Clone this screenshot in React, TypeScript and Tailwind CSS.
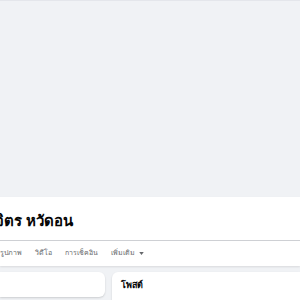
export default function App() {
  return (
    <div className="w-[300px] h-[300px] overflow-hidden bg-[#f0f2f5] font-['Liberation_Sans',sans-serif]">
      {/* Cover */}
      <div className="h-[197px] border-t border-[#e4e6eb] bg-[#f0f2f5]" />

      {/* Profile header */}
      <div className="bg-white shadow-[0_1px_2px_rgba(0,0,0,0.1)]">
        <div className="h-[43px] flex items-center pt-[3px]">
          <h1 className="-ml-[5px] text-[15px] font-bold text-[#050505] leading-none whitespace-nowrap">
            จิตร หวัดอน
          </h1>
        </div>
        <div className="border-t border-[#ced0d4] h-[26px] flex items-center gap-[13px] text-[7px] text-[#65676b] whitespace-nowrap">
          <span>รูปภาพ</span>
          <span>วิดีโอ</span>
          <span>การเช็คอิน</span>
          <span className="flex items-center gap-[4px]">
            เพิ่มเติม
            <svg width="5" height="3" viewBox="0 0 6 4">
              <path d="M0 0h6L3 4z" fill="#65676b" />
            </svg>
          </span>
        </div>
      </div>

      {/* Cards */}
      <div className="flex gap-[7px] mt-[6px]">
        <div className="w-[105px] h-[25px] bg-white rounded-r-[6px] shadow-[0_1px_2px_rgba(0,0,0,0.15)] shrink-0" />
        <div className="flex-1 h-[40px] bg-white rounded-tl-[6px] shadow-[0_1px_2px_rgba(0,0,0,0.15)] px-[9px] pt-[7px]">
          <h2 className="text-[9px] font-bold text-[#050505]">โพสต์</h2>
        </div>
      </div>
    </div>
  );
}
